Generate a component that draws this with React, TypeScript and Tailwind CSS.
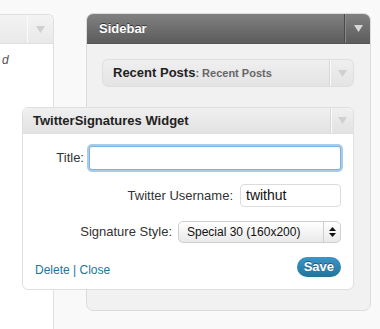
import React from "react";

const Arrow = ({ color = "#c4c4c4" }: { color?: string }) => (
  <svg width="9" height="7" viewBox="0 0 9 7">
    <path d="M0 0 L9 0 L4.5 7 Z" fill={color} />
  </svg>
);

export default function App() {
  return (
    <div
      className="relative w-[380px] h-[329px] overflow-hidden bg-[#f9f9f9] text-[#333]"
      style={{ fontFamily: '"Liberation Sans", Arial, sans-serif' }}
    >
      <div className="flex pt-[13px]">
        {/* left panel */}
        <div className="mt-[1px] w-[54px] h-[400px] shrink-0 bg-white border-r border-t border-[#dfdfdf] rounded-tr-[6px] flex flex-col">
          <div className="h-[29px] flex bg-gradient-to-b from-[#f3f3f3] to-[#e9e9e9] border-b border-[#e0e0e0] rounded-tr-[6px]">
            <div className="w-[28px] border-r border-[#fafafa]" />
            <div className="flex-1 flex items-center justify-center">
              <Arrow color="#d0d0d0" />
            </div>
          </div>
          <div className="pl-[2px] pt-[7px] italic text-[12px] text-[#555]">d</div>
        </div>

        {/* sidebar */}
        <div className="ml-[32px] w-[285px] h-[298px] shrink-0 flex flex-col rounded-[7px] border border-[#dcdcdc] bg-[#f1f1f1] overflow-hidden">
          <div className="h-[30px] flex bg-gradient-to-b from-[#818181] to-[#5c5c5c] border-b border-[#555]">
            <div
              className="flex-1 flex items-center pl-[12px] text-white font-bold text-[13px] border-r border-[#4a4a4a]"
              style={{ textShadow: "0 -1px 0 #333" }}
            >
              Sidebar
            </div>
            <div className="w-[25px] flex items-center justify-center border-l border-[#8a8a8a]">
              <Arrow color="#d8d8d8" />
            </div>
          </div>
          <div className="pl-[15px] pt-[15px]">
            <div className="w-[252px] h-[28px] flex rounded-[6px] border border-[#dfdfdf] bg-gradient-to-b from-[#efefef] to-[#e4e4e4]">
              <div className="flex-1 flex items-center pl-[10px] border-r border-[#d9d9d9]">
                <span className="font-bold text-[13px] text-[#222]">Recent Posts</span>
                <span className="text-[11px] text-[#666] font-bold">: Recent Posts</span>
              </div>
              <div className="w-[23px] flex items-center justify-center border-l border-[#fafafa]">
                <Arrow color="#d0d0d0" />
              </div>
            </div>
            <div className="mt-[20px] w-[252px] h-[28px] rounded-[6px] border border-[#dfdfdf] bg-[#ececec]" />
          </div>
        </div>
      </div>

      {/* dragged widget */}
      <div className="absolute left-[22px] top-[107px] w-[332px] h-[183px] flex flex-col rounded-[6px] border border-[#dfdfdf] bg-white">
        <div className="h-[26px] flex bg-gradient-to-b from-[#f0f0f0] to-[#e2e2e2] border-b border-[#e0e0e0] rounded-t-[6px]">
          <div className="flex-1 flex items-center pl-[10px] font-bold text-[13px] text-[#222] border-r border-[#d9d9d9]">
            TwitterSignatures Widget
          </div>
          <div className="w-[22px] flex items-center justify-center border-l border-[#fafafa]">
            <Arrow color="#d0d0d0" />
          </div>
        </div>
        <div className="flex flex-col pr-[12px] pt-[12px] text-[13px] text-[#333]">
          <div className="flex items-center justify-end gap-[5px] h-[24px]">
            <span>Title:</span>
            <div className="w-[252px] h-[24px] rounded-[3px] border border-[#7eb1d9] shadow-[0_0_0_2px_#a7cbe8] bg-white" />
          </div>
          <div className="mt-[14px] flex items-center justify-end gap-[7px] h-[23px]">
            <span>Twitter Username:</span>
            <div className="w-[101px] h-[23px] rounded-[4px] border border-[#dcdcdc] bg-white flex items-center pl-[5px] text-[14px] text-[#111]">
              twithut
            </div>
          </div>
          <div className="mt-[14px] flex items-center justify-end gap-[6px] h-[22px]">
            <span>Signature Style:</span>
            <div className="w-[163px] h-[22px] rounded-[5px] border border-[#cfcfcf] bg-gradient-to-b from-[#ffffff] to-[#e9e9e9] flex text-[12px] text-[#111]">
              <div className="flex-1 flex items-center pl-[8px] border-r border-[#cfcfcf]">Special 30 (160x200)</div>
              <div className="w-[16px] flex items-center justify-center">
                <svg width="7" height="10" viewBox="0 0 7 10">
                  <path d="M3.5 0 L7 4 L0 4 Z M0 6 L7 6 L3.5 10 Z" fill="#111" />
                </svg>
              </div>
            </div>
          </div>
          <div className="mt-[14px] flex items-center justify-between h-[20px] pl-[12px]">
            <span className="text-[12px] text-[#21759b] mt-[6px]">Delete | Close</span>
            <div
              className="h-[20px] px-[7px] rounded-full bg-gradient-to-b from-[#3b95c6] to-[#21759b] text-white font-bold text-[13px] flex items-center"
              style={{ textShadow: "0 -1px 0 #1a5a7a" }}
            >
              Save
            </div>
          </div>
        </div>
      </div>
    </div>
  );
}
